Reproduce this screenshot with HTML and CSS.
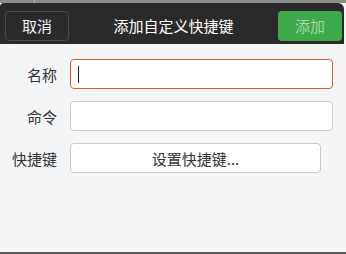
FILE: index.html
```html
<!DOCTYPE html>
<html lang="zh">
<head>
<meta charset="utf-8">
<link rel="stylesheet" href="styles.css">
</head>
<body>
<div class="backdrop-top"><span class="vline"></span></div>
<div class="dialog">
  <div class="header">
    <button class="btn-cancel">取消</button>
    <div class="title">添加自定义快捷键</div>
    <button class="btn-add">添加</button>
  </div>
  <div class="form">
    <div class="row">
      <label class="label">名称</label>
      <div class="input focus"><span class="caret"></span></div>
    </div>
    <div class="row">
      <label class="label">命令</label>
      <div class="input"></div>
    </div>
    <div class="row">
      <label class="label">快捷键</label>
      <button class="shortcut">设置快捷键...</button>
    </div>
  </div>
</div>
<div class="backdrop-bottom"></div>
</body>
</html>
```
FILE: styles.css
```css
html, body {
  margin: 0;
  padding: 0;
  width: 346px;
  height: 254px;
  overflow: hidden;
  background: #8a8a8a;
  font-family: "Noto Sans CJK SC", "Noto Sans", sans-serif;
}
.backdrop-top {
  height: 3px;
  position: relative;
  background: #8d8d8d;
}
.vline {
  position: absolute;
  left: 34px;
  top: 0;
  width: 1px;
  height: 3px;
  background: #b5b5b5;
}
.dialog {
  width: 346px;
  height: 249px;
  display: flex;
  flex-direction: column;
  background: #f4f5f7;
}
.header {
  height: 41px;
  background: #2b2a2a;
  border-radius: 4px 6px 0 0;
  margin-right: 2px;
  display: flex;
  align-items: center;
  padding: 0 5px 0 5px;
  box-sizing: border-box;
  position: relative;
}
.btn-cancel {
  width: 64px;
  height: 30px;
  margin-top: 4px;
  box-sizing: border-box;
  background: #2b2a2a;
  border: 1px solid #4a4a4a;
  border-radius: 4px;
  color: #f2f2f2;
  font-family: inherit;
  font-size: 15px;
  padding: 0;
}
.title {
  flex: 1;
  text-align: center;
  color: #ffffff;
  font-size: 15px;
  margin-top: 3px;
}
.btn-add {
  width: 64px;
  height: 30px;
  margin-top: 4px;
  box-sizing: border-box;
  background: #3ea94b;
  border: none;
  border-radius: 4px;
  color: #a6d8a8;
  font-family: inherit;
  font-size: 15px;
  padding: 0;
  margin-right: -3px;
}
.form {
  padding: 15px 0 0 0;
  display: flex;
  flex-direction: column;
  gap: 12px;
}
.row {
  display: flex;
  align-items: center;
  gap: 13px;
  height: 30px;
}
.label {
  width: 57px;
  text-align: right;
  color: #333333;
  font-size: 15px;
}
.input {
  width: 263px;
  height: 30px;
  box-sizing: border-box;
  background: #ffffff;
  border: 1px solid #c7c9cd;
  border-radius: 4px;
  display: flex;
  align-items: center;
  padding-left: 7px;
}
.input.focus {
  border-color: #e8561f;
}
.caret {
  width: 1px;
  height: 17px;
  background: #222222;
}
.shortcut {
  width: 251px;
  height: 30px;
  box-sizing: border-box;
  background: #ffffff;
  border: 1px solid #c7c9cd;
  border-radius: 4px;
  color: #333333;
  font-family: inherit;
  font-size: 15px;
  padding: 0;
}
.backdrop-bottom {
  height: 2px;
  background: #5a5a5a;
}
```
